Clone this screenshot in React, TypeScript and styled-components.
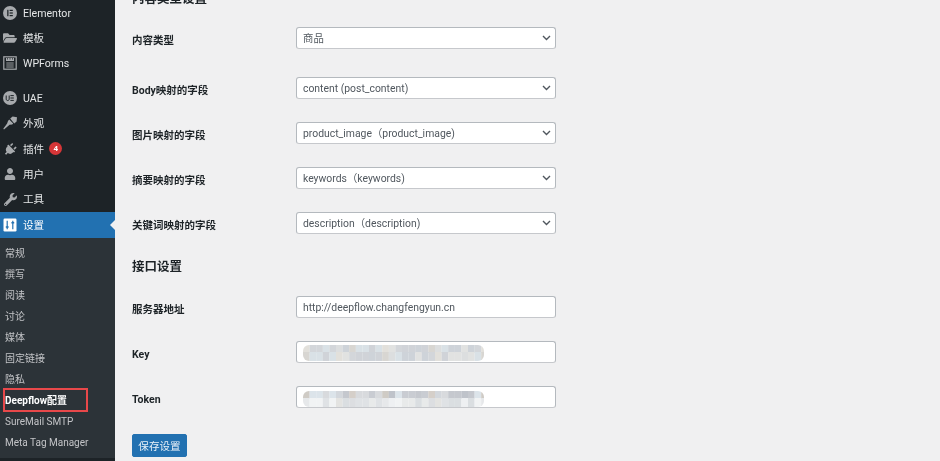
import styled, { createGlobalStyle } from 'styled-components';
import { FaFolderOpen, FaPlug, FaUser, FaWrench } from 'react-icons/fa';

const GlobalStyle = createGlobalStyle`
  html, body {
    margin: 0;
    padding: 0;
    height: 100%;
    overflow: hidden;
    background: #f0f0f1;
  }
`;

const FONT = `Roboto, "Noto Sans CJK SC", sans-serif`;

const Page = styled.div`
  display: flex;
  width: 940px;
  height: 461px;
  overflow: hidden;
  background: #f0f0f1;
  font-family: ${FONT};
  filter: blur(0.35px);
`;

const Sidebar = styled.aside`
  flex: 0 0 115px;
  display: flex;
  flex-direction: column;
  height: 461px;
  background: #1d2327;
  color: #f0f0f1;
`;

const MenuItem = styled.div<{ $gap?: number; $active?: boolean }>`
  position: relative;
  flex: 0 0 25.4px;
  display: flex;
  align-items: center;
  gap: 6px;
  padding-left: 3px;
  margin-top: ${(p) => p.$gap ?? 0}px;
  font-size: 10.6px;
  line-height: 14px;
  color: ${(p) => (p.$active ? '#fff' : '#e4e6e7')};
  background: ${(p) => (p.$active ? '#2271b1' : 'transparent')};
  box-sizing: border-box;
`;

const MenuLabel = styled.span`
  padding-top: 2px;
`;

const IconBox = styled.span<{ $turn?: number }>`
  flex: 0 0 14px;
  width: 14px;
  height: 14px;
  display: flex;
  align-items: center;
  justify-content: center;
  color: #a7aaad;
  transform: rotate(${(p) => p.$turn ?? 0}deg);
  svg {
    display: block;
  }
`;

const Badge = styled.span`
  width: 13px;
  height: 13px;
  border-radius: 50%;
  margin-left: -1px;
  background: #d63638;
  color: #fff;
  font-size: 8px;
  font-weight: 700;
  line-height: 13px;
  text-align: center;
`;

const Notch = styled.span`
  position: absolute;
  right: 0;
  top: 50%;
  margin-top: -5px;
  border-style: solid;
  border-width: 5px 5px 5px 0;
  border-color: transparent #f0f0f1 transparent transparent;
`;

const SubMenu = styled.div`
  flex: 0 0 220px;
  display: flex;
  flex-direction: column;
  padding-top: 5px;
  box-sizing: border-box;
  background: #2c3338;
`;

const SubItem = styled.div<{ $current?: boolean }>`
  position: relative;
  flex: 0 0 21px;
  box-sizing: border-box;
  display: flex;
  align-items: center;
  padding: 2px 0 0 5px;
  font-size: 10px;
  line-height: 14px;
  font-weight: ${(p) => (p.$current ? 700 : 400)};
  color: ${(p) => (p.$current ? '#fff' : '#c3c4c7')};
`;

const Callout = styled.span`
  position: absolute;
  left: 3px;
  top: -2px;
  width: 85px;
  height: 24px;
  box-sizing: border-box;
  border: 2px solid #e8484a;
`;

const Main = styled.main`
  flex: 1;
  display: flex;
  flex-direction: column;
  padding-left: 17px;
  margin-top: -10px;
`;

const SectionTitle = styled.h2<{ $top: number }>`
  margin: ${(p) => p.$top}px 0 0;
  height: 18px;
  font-size: 12.5px;
  line-height: 18px;
  font-weight: 700;
  color: #1d2327;
`;

const Row = styled.div<{ $top: number }>`
  display: flex;
  align-items: center;
  height: 22px;
  margin-top: ${(p) => p.$top}px;
`;

const Label = styled.label`
  flex: 0 0 164px;
  padding-top: 5px;
  font-size: 10.5px;
  line-height: 14px;
  font-weight: 700;
  color: #1d2327;
`;

const Field = styled.div`
  position: relative;
  width: 260px;
  height: 22px;
  box-sizing: border-box;
  display: flex;
  align-items: center;
  padding: 2px 6px 0;
  background: #fff;
  border: 1px solid #b4b9be;
  border-bottom-color: #c6c8cc;
  border-radius: 3px;
  font-size: 10.4px;
  line-height: 14px;
  color: #50575e;
`;

const Chevron = styled.svg`
  position: absolute;
  right: 4px;
  top: 6px;
`;

const Mosaic = styled.svg<{ $top: number }>`
  position: absolute;
  left: 6px;
  top: ${(p) => p.$top}px;
`;

const SaveButton = styled.button`
  align-self: flex-start;
  width: 55px;
  height: 23px;
  margin-top: 26px;
  padding: 0;
  border: 1px solid #2271b1;
  border-radius: 2px;
  background: #2271b1;
  color: #e8f1f8;
  font-family: ${FONT};
  font-size: 10.6px;
`;

const ElementorIcon = () => (
  <svg width="14" height="14" viewBox="0 0 14 14">
    <circle cx="7" cy="7" r="7" fill="#a7aaad" />
    <rect x="4.2" y="3.8" width="1.3" height="6.4" fill="#1d2327" />
    <rect x="6.6" y="3.8" width="3.2" height="1.2" fill="#1d2327" />
    <rect x="6.6" y="6.4" width="3.2" height="1.2" fill="#1d2327" />
    <rect x="6.6" y="9" width="3.2" height="1.2" fill="#1d2327" />
  </svg>
);

const FormsIcon = () => (
  <svg width="14" height="14" viewBox="0 0 14 14">
    <rect x=".8" y=".8" width="12.4" height="12.4" fill="none" stroke="#a7aaad" strokeWidth="1.2" />
    <path d="M3 2h8v3H3z" fill="#a7aaad" />
    <path d="M4.5 2v1.6M7 2v1.6M9.5 2v1.6" stroke="#1d2327" strokeWidth=".7" />
    <path d="M3.3 7h7.4M3.3 9h7.4M3.3 11h7.4" stroke="#a7aaad" strokeWidth=".9" />
  </svg>
);

const UaeIcon = () => (
  <svg width="14" height="14" viewBox="0 0 14 14">
    <circle cx="7" cy="7" r="7" fill="#a7aaad" />
    <path d="M3.2 4.5v3.4c0 1.1.6 1.6 1.5 1.6S6.2 9 6.2 7.9V4.5" fill="none" stroke="#1d2327" strokeWidth="1" />
    <path d="M7.4 4.6h3.4M7.4 7h3.4M7.4 9.4h3.4" stroke="#1d2327" strokeWidth="1" />
  </svg>
);

const BrushIcon = () => (
  <svg width="14" height="14" viewBox="0 0 14 14" fill="#a7aaad">
    <path d="M7.2 2.6L9.6.6 14 1.2l-.4 4.2-2.4 2.2z" />
    <path d="M6.2 3.6l4 4-1 .9-2.6.3L1 13.4.3 12.8l3.8-5.2.9-2.6z" />
  </svg>
);

const SettingsIcon = () => (
  <svg width="14" height="14" viewBox="0 0 14 14">
    <rect x=".5" y=".5" width="13" height="13" rx="1.2" fill="#fff" />
    <path d="M4.2 2.8v8.4M9.8 2.8v8.4" stroke="#2271b1" strokeWidth="1.2" />
    <path d="M2.8 8.2h2.8v1.6H2.8zM8.4 4h2.8v1.6H8.4z" fill="#2271b1" />
  </svg>
);

const mainMenu = [
  { label: 'Elementor', icon: <ElementorIcon /> },
  { label: '模板', icon: <FaFolderOpen size={14} /> },
  { label: 'WPForms', icon: <FormsIcon /> },
  { label: 'UAE', icon: <UaeIcon />, gap: 9 },
  { label: '外观', icon: <BrushIcon /> },
  { label: '插件', icon: <FaPlug size={13} />, badge: '4', turn: 45 },
  { label: '用户', icon: <FaUser size={12} /> },
  { label: '工具', icon: <FaWrench size={13} /> },
];

const subMenu = ['常规', '撰写', '阅读', '讨论', '媒体', '固定链接', '隐私', 'Deepflow配置', 'SureMail SMTP', 'Meta Tag Manager'];

const shades: Record<string, string[]> = {
  soft: ['#dcdedf', '#d3d6da', '#ced3d9', '#e2e0db', '#d9e1e6', '#e1e2e1', '#d8d6d2', '#d0d3d8'],
  dark: ['#d5cfc9', '#c9ccd2', '#d3d7dc', '#dce4ea', '#c5c8ce', '#cfcbc5', '#d8dadd', '#bfc3ca'],
  light: ['#e6e8ea', '#dfe2e5', '#eef0f2', '#dcdee1', '#e8eaea', '#e3e3e1', '#f1f3f4', '#dadee1'],
};

// 打码区域：两行色块
const Blurred = ({ id, top, rows }: { id: string; top: number; rows: [string, string] }) => (
  <Mosaic $top={top} width="181" height="18" viewBox="0 0 181 18">
    <defs>
      <filter id={`soft-${id}`}>
        <feGaussianBlur stdDeviation="0.7" />
      </filter>
      <clipPath id={`clip-${id}`}>
        <rect x="0" y="1" width="181" height="16" rx="6" />
      </clipPath>
    </defs>
    <g clipPath={`url(#clip-${id})`}>
      <g filter={`url(#soft-${id})`}>
        {rows.map((shade, r) =>
          Array.from({ length: 28 }, (_, i) => (
            <rect
              key={`${r}-${i}`}
              x={i * 6.6}
              y={r * 8}
              width="6.7"
              height="9"
              fill={shades[shade][(i * 5 + (i * i) % 7 + r * 3 + id.length) % 8]}
            />
          )),
        )}
      </g>
    </g>
  </Mosaic>
);

const ArrowDown = () => (
  <Chevron width="9" height="8" viewBox="0 0 9 8">
    <path d="M1 2l3.5 3.5L8 2" fill="none" stroke="#50575e" strokeWidth="1.4" />
  </Chevron>
);

const selects = [
  { label: '内容类型', value: '商品', top: 19 },
  { label: 'Body映射的字段', value: 'content (post_content)', top: 28 },
  { label: '图片映射的字段', value: 'product_image（product_image)', top: 23 },
  { label: '摘要映射的字段', value: 'keywords（keywords)', top: 23 },
  { label: '关键词映射的字段', value: 'description（description)', top: 23 },
];

export default function App() {
  return (
    <>
      <GlobalStyle />
      <Page>
        <Sidebar>
          {mainMenu.map((m) => (
            <MenuItem key={m.label} $gap={m.gap}>
              <IconBox $turn={m.turn}>{m.icon}</IconBox>
              <MenuLabel>{m.label}</MenuLabel>
              {m.badge && <Badge>{m.badge}</Badge>}
            </MenuItem>
          ))}
          <MenuItem $active>
            <IconBox>
              <SettingsIcon />
            </IconBox>
            <MenuLabel>设置</MenuLabel>
            <Notch />
          </MenuItem>
          <SubMenu>
            {subMenu.map((s) => (
              <SubItem key={s} $current={s.startsWith('Deepflow')}>
                {s}
                {s.startsWith('Deepflow') && <Callout />}
              </SubItem>
            ))}
          </SubMenu>
        </Sidebar>
        <Main>
          <SectionTitle $top={0}>内容类型设置</SectionTitle>
          {selects.map((s) => (
            <Row key={s.label} $top={s.top}>
              <Label>{s.label}</Label>
              <Field>
                {s.value}
                <ArrowDown />
              </Field>
            </Row>
          ))}
          <SectionTitle $top={24}>接口设置</SectionTitle>
          <Row $top={20}>
            <Label>服务器地址</Label>
            <Field>http://deepflow.changfengyun.cn</Field>
          </Row>
          <Row $top={23}>
            <Label>Key</Label>
            <Field>
              <Blurred id="key" top={2} rows={['soft', 'soft']} />
            </Field>
          </Row>
          <Row $top={23}>
            <Label>Token</Label>
            <Field>
              <Blurred id="token" top={3} rows={['dark', 'light']} />
            </Field>
          </Row>
          <SaveButton>保存设置</SaveButton>
        </Main>
      </Page>
    </>
  );
}
